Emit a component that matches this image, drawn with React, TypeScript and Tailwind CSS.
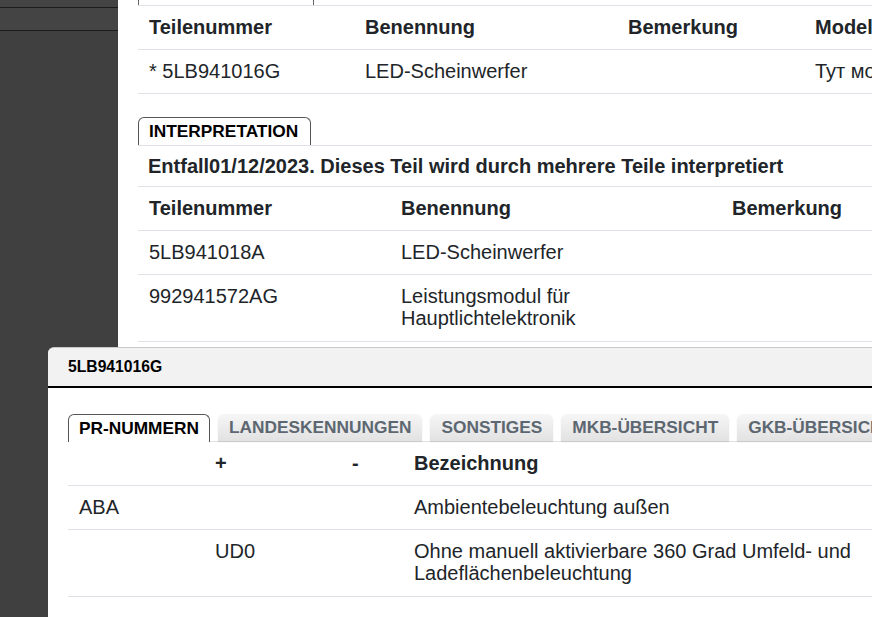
import React from 'react';

const font = { fontFamily: '"Liberation Sans", Arial, sans-serif' };

const cell = 'pl-[11px] pr-2 pt-[10px] pb-[11px] leading-[22px]';
const cell2 = 'pl-[11px] pr-2 pt-[10px] pb-[12px] leading-[22px]';

function Row({ cols, cells, head }: { cols: string; cells: React.ReactNode[]; head?: boolean }) {
    return (
        <div className={`grid ${cols} border-b border-[#dee2e6] ${head ? 'font-bold' : ''}`}>
            {cells.map((c, i) => (
                <div key={i} className={`${cell} whitespace-nowrap overflow-hidden`}>{c}</div>
            ))}
        </div>
    );
}

function Tab({ label, active }: { label: string; active?: boolean }) {
    if (active) {
        return (
            <div className="h-[28px] px-[10px] flex items-center border border-b-0 border-[#555] rounded-t-[6px] bg-white text-[17.3px] font-bold text-black -mb-px relative">
                {label}
            </div>
        );
    }
    return (
        <div className="h-[27px] px-[11px] flex items-center rounded-t-[6px] bg-gradient-to-b from-[#f6f6f6] to-[#e2e2e2] shadow-[0_1px_1px_#c8c8c8] text-[17.3px] font-bold text-[#5d6771] whitespace-nowrap">
            {label}
        </div>
    );
}

export default function App() {
    const t1 = 'grid-cols-[216px_263px_187px_1fr]';
    const t2 = 'grid-cols-[252px_331px_1fr]';
    const t3 = 'grid-cols-[136px_137px_62px_1fr]';

    return (
        <div className="relative w-full h-[617px] overflow-hidden bg-white text-[20px] text-[#212529]" style={font}>
            <div className="flex h-full">
                {/* sidebar */}
                <div className="w-[118px] shrink-0 bg-[#404040]">
                    <div className="h-[8px] border-b border-[#1c1c1c] bg-[#444]" />
                    <div className="h-[23px] border-b border-[#1c1c1c] bg-[#444]" />
                </div>

                {/* main content */}
                <div className="flex-1 min-w-0 pl-[20px]">
                    <div className="h-[5px] w-[176px] border-x border-[#666]" />
                    <div className="border-t border-[#dee2e6]">
                        <Row cols={t1} head cells={['Teilenummer', 'Benennung', 'Bemerkung', 'Modell']} />
                        <Row cols={t1} cells={['* 5LB941016G', 'LED-Scheinwerfer', '', 'Тут может быть модель']} />
                    </div>

                    <div className="mt-[23px] flex">
                        <div className="h-[28px] w-[173px] pl-[10px] flex items-center border border-b-0 border-[#555] rounded-t-[6px] text-[17.3px] font-bold text-black">
                            INTERPRETATION
                        </div>
                    </div>
                    <div className="border-t border-[#dee2e6]">
                        <div className="pl-[10px] pt-[9px] pb-[9px] leading-[22px] font-bold border-b border-[#dee2e6] whitespace-nowrap">
                            Entfall01/12/2023. Dieses Teil wird durch mehrere Teile interpretiert
                        </div>
                        <Row cols={t2} head cells={['Teilenummer', 'Benennung', 'Bemerkung']} />
                        <Row cols={t2} cells={['5LB941018A', 'LED-Scheinwerfer', '']} />
                        <div className={`grid ${t2} border-b border-[#dee2e6]`}>
                            <div className={cell2}>992941572AG</div>
                            <div className={cell2}>Leistungsmodul für<br />Hauptlichtelektronik</div>
                            <div className={cell2} />
                        </div>
                    </div>
                </div>
            </div>

            {/* dialog */}
            <div className="absolute left-[48px] top-[347px] w-[1000px] h-[400px] bg-white rounded-tl-[6px] border-t border-[#c8c8c8]">
                <div className="h-[40px] bg-[#f2f2f2] rounded-tl-[6px] border-b-2 border-black flex items-center pl-[20px] text-[15.7px] font-bold text-black">
                    5LB941016G
                </div>
                <div className="pl-[20px] pt-[26px]">
                    <div className="flex items-end gap-[8px] border-b border-[#dee2e6]">
                        <Tab label="PR-NUMMERN" active />
                        <Tab label="LANDESKENNUNGEN" />
                        <Tab label="SONSTIGES" />
                        <Tab label="MKB-ÜBERSICHT" />
                        <Tab label="GKB-ÜBERSICHT" />
                    </div>
                    <div className="w-[805px]">
                        <Row cols={t3} head cells={['', '+', '-', 'Bezeichnung']} />
                        <Row cols={t3} cells={['ABA', '', '', 'Ambientebeleuchtung außen']} />
                        <div className={`grid ${t3} border-b border-[#dee2e6]`}>
                            <div className={cell2} />
                            <div className={cell2}>UD0</div>
                            <div className={cell2} />
                            <div className={cell2}>Ohne manuell aktivierbare 360 Grad Umfeld- und<br />Ladeflächenbeleuchtung</div>
                        </div>
                    </div>
                </div>
            </div>
        </div>
    );
}
